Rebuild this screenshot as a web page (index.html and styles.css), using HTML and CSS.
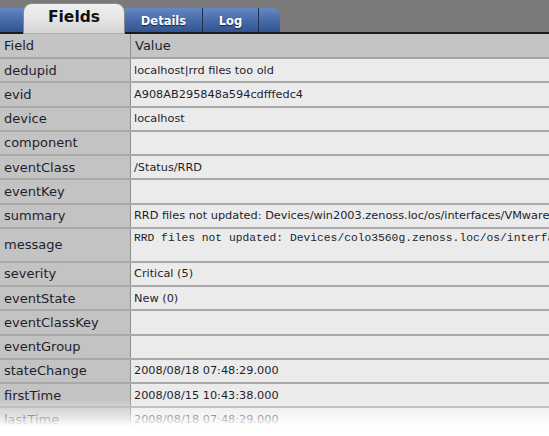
FILE: index.html
```html
<!DOCTYPE html>
<html>
<head>
<meta charset="utf-8">
<link rel="stylesheet" href="styles.css">
</head>
<body>
<div class="panel">
  <div class="tabbar">
    <div class="tab blue stub-left"></div>
    <div class="tab active">Fields</div>
    <div class="tab blue">Details</div>
    <div class="tab blue">Log</div>
    <div class="tab blue stub-right"></div>
    <div class="filler"></div>
  </div>
  <table class="fields">
    <thead>
      <tr><th class="label">Field</th><th class="value">Value</th></tr>
    </thead>
    <tbody>
      <tr><td class="label">dedupid</td><td class="value">localhost|rrd files too old</td></tr>
      <tr><td class="label">evid</td><td class="value">A908AB295848a594cdfffedc4</td></tr>
      <tr><td class="label">device</td><td class="value">localhost</td></tr>
      <tr><td class="label">component</td><td class="value"></td></tr>
      <tr><td class="label">eventClass</td><td class="value">/Status/RRD</td></tr>
      <tr><td class="label">eventKey</td><td class="value"></td></tr>
      <tr><td class="label">summary</td><td class="value">RRD files not updated: Devices/win2003.zenoss.loc/os/interfaces/VMware</td></tr>
      <tr class="tall"><td class="label">message</td><td class="value mono"><div class="clip">RRD files not updated: Devices/colo3560g.zenoss.loc/os/interfaces</div></td></tr>
      <tr><td class="label">severity</td><td class="value">Critical (5)</td></tr>
      <tr><td class="label">eventState</td><td class="value">New (0)</td></tr>
      <tr><td class="label">eventClassKey</td><td class="value"></td></tr>
      <tr><td class="label">eventGroup</td><td class="value"></td></tr>
      <tr><td class="label">stateChange</td><td class="value">2008/08/18 07:48:29.000</td></tr>
      <tr><td class="label">firstTime</td><td class="value">2008/08/15 10:43:38.000</td></tr>
      <tr><td class="label">lastTime</td><td class="value">2008/08/18 07:48:29.000</td></tr>
    </tbody>
  </table>
  <div class="fade"></div>
</div>
</body>
</html>
```

FILE: styles.css
```css
html, body {
  margin: 0;
  padding: 0;
  background: #ffffff;
}

.panel {
  position: relative;
  width: 549px;
  height: 436px;
  overflow: hidden;
  background: #e9e9e9;
  font-family: "DejaVu Sans", "Liberation Sans", sans-serif;
  color: #1e1e2e;
}

.tabbar {
  display: flex;
  align-items: flex-end;
  height: 34px;
  background: #7a7a7a;
}

.tab {
  box-sizing: border-box;
  display: flex;
  align-items: center;
  justify-content: center;
  font-weight: bold;
}

.blue {
  height: 26px;
  background: linear-gradient(#6489c4 0%, #4a6eae 45%, #33548f 100%);
  border-bottom: 2px solid #1a1a1a;
  border-right: 1px solid #1f2f52;
  color: #ffffff;
  font-size: 11.5px;
  text-shadow: 0 1px 1px #10213f;
  padding-top: 2px;
}

.stub-left {
  width: 23px;
  border-right: none;
}

.active {
  width: 102px;
  height: 31px;
  background: linear-gradient(#f0f0f0 0%, #e4e4e4 55%, #d3d3d3 100%);
  border: 1px solid #8a8a8a;
  border-bottom: 1px solid #b0b0b0;
  border-radius: 9px 9px 0 0;
  color: #111111;
  font-size: 15.5px;
  padding-bottom: 3px;
}

.tab.blue:nth-child(3) { width: 78px; }
.tab.blue:nth-child(4) { width: 56px; }

.stub-right {
  width: 21px;
  border-right: none;
  border-top-right-radius: 8px;
}

.filler {
  flex: 1;
  height: 2px;
  background: #1a1a1a;
}

.fields {
  width: 100%;
  border-collapse: collapse;
  table-layout: fixed;
}

.fields th,
.fields td {
  padding: 0 0 0 4px;
  text-align: left;
  font-weight: normal;
  white-space: nowrap;
  overflow: hidden;
  vertical-align: middle;
}

.fields th {
  height: 23px;
  background: #c4c4c4;
  font-size: 13px;
  border-bottom: 2px solid #a6a6a6;
}

.fields td {
  height: 22.25px;
  border-bottom: 2px solid #a9a9a9;
}

.label {
  width: 126px;
  font-size: 13px;
  background: #c3c3c3;
  border-right: 1px solid #8e8e8e;
}

td.value {
  background: #ebebeb;
  font-size: 11.3px;
  padding-left: 3px;
}

.tall td {
  height: 32px;
}

.mono {
  vertical-align: top !important;
}

.mono .clip {
  font-family: "Liberation Mono", monospace;
  font-size: 11.3px;
  padding-top: 3px;
  white-space: nowrap;
}

.fade {
  position: absolute;
  left: 0;
  right: 0;
  bottom: 0;
  height: 38px;
  background: linear-gradient(rgba(255, 255, 255, 0) 0%, rgba(255, 255, 255, 0.5) 45%, #ffffff 75%);
}
```
